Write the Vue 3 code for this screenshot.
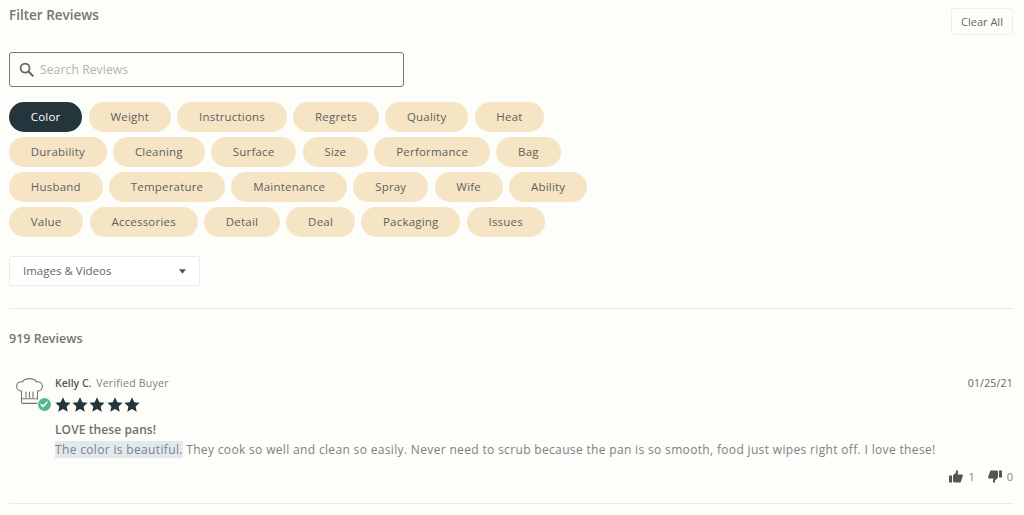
<script setup>
const rows = ['Color','Weight','Instructions','Regrets','Quality','Heat','Durability','Cleaning','Surface','Size','Performance','Bag','Husband','Temperature','Maintenance','Spray','Wife','Ability','Value','Accessories','Detail','Deal','Packaging','Issues'];
const stars = [1,2,3,4,5];
</script>

<template>
  <div class="page">
    <div class="head">
      <h2 class="title">Filter Reviews</h2>
      <button class="clear">Clear All</button>
    </div>
    <div class="search">
      <svg class="sicon" viewBox="0 0 16 16" width="15" height="15"><circle cx="6.5" cy="6.5" r="4.8" fill="none" stroke="#666" stroke-width="1.9"/><path d="M10.2 10.2L14.6 14.6" stroke="#666" stroke-width="2.2" stroke-linecap="round"/></svg>
      <span class="ph">Search Reviews</span>
    </div>
    <div class="pills">
      <span v-for="(p,i) in rows" :key="p" class="pill" :class="{on:i===0}">{{ p }}</span>
    </div>
    <div class="select">
      <span class="sel-label">Images &amp; Videos</span>
      <svg width="7" height="5" viewBox="0 0 8 5"><path d="M0 0H8L4 5Z" fill="#555"/></svg>
    </div>
    <hr class="rule r1" />
    <h3 class="count">919 Reviews</h3>
    <div class="review">
      <div class="avatar">
        <svg width="27" height="27" viewBox="0 0 27 27" fill="none" stroke="#777" stroke-width="1.1" stroke-linecap="round" stroke-linejoin="round">
          <path d="M5.5 17.5V13C2.5 13 .6 10.8 .6 8.2C.6 5.2 3.2 3.2 6.3 3.9C7.5 1.8 10 .6 13.4 .6C16.8 .6 19.3 1.8 20.6 3.9C23.6 3.2 26.4 5.2 26.4 8.2C26.4 10.8 24.5 13 21.5 13V21"/>
          <path d="M5.5 17.5V24C5.5 25 6 25.4 7 25.4H21"/>
          <path d="M10 14V19.5M13.5 14V19.5M17 14V19.5M5.5 20.8H21.5"/>
        </svg>
        <span class="badge"><svg width="8" height="7" viewBox="0 0 8 7" fill="none"><path d="M1 3.6L3 5.6L7 1.3" stroke="#fff" stroke-width="1.4" stroke-linecap="round" stroke-linejoin="round"/></svg></span>
      </div>
      <div class="body">
        <div class="meta">
          <div><b class="name">Kelly C.</b> <span class="ver">Verified Buyer</span></div>
          <span class="date">01/25/21</span>
        </div>
        <div class="stars">
          <svg v-for="s in stars" :key="s" width="16" height="15" viewBox="0 0 24 23"><path d="M12 0.5L15.5 8L23.6 8.9L17.6 14.4L19.2 22.5L12 18.4L4.8 22.5L6.4 14.4L0.4 8.9L8.5 8Z" fill="#24363b"/></svg>
        </div>
        <div class="rtitle">LOVE these pans!</div>
        <p class="text"><mark>The color is beautiful.</mark> They cook so well and clean so easily. Never need to scrub because the pan is so smooth, food just wipes right off. I love these!</p>
        <div class="votes">
          <svg width="14" height="13" viewBox="0 0 14 13"><path d="M0 5.5H3V12.5H0ZM4 5.5L7 2.5V0.3C8.6 0 9.4 1 9 2.5L8.6 4.5H13C14 4.5 14 5.5 13.7 6.2L12 11.5C11.8 12.3 11.3 12.5 10.6 12.5H5.5L4 11.8Z" fill="#555"/></svg>
          <span class="n">1</span>
          <svg class="down" width="14" height="13" viewBox="0 0 14 13"><path d="M0 5.5H3V12.5H0ZM4 5.5L7 2.5V0.3C8.6 0 9.4 1 9 2.5L8.6 4.5H13C14 4.5 14 5.5 13.7 6.2L12 11.5C11.8 12.3 11.3 12.5 10.6 12.5H5.5L4 11.8Z" fill="#555"/></svg>
          <span class="n">0</span>
        </div>
      </div>
    </div>
    <hr class="rule r2" />
  </div>
</template>

<style>
html, body { margin: 0; background: #fdfdf9; }
</style>

<style scoped>
.page { box-sizing: border-box; width: 1024px; height: 515px; overflow: hidden; padding: 0 11px 0 9px; background: #fdfdf9; font-family: "Open Sans", sans-serif; color: #6b6b6b; }
.head { display: flex; justify-content: space-between; align-items: flex-start; height: 52px; padding-top: 8px; box-sizing: border-box; }
.title { margin: 0; font-size: 13.5px; line-height: 15px; font-weight: 600; color: #757575; }
.clear { box-sizing: border-box; width: 62px; height: 27px; background: #fdfdf9; border: 1px solid #eeeeea; border-radius: 3px; font: 400 11px "Open Sans", sans-serif; color: #666; padding: 0; }
.search { box-sizing: border-box; width: 395px; height: 35px; border: 1px solid #777; border-radius: 3px; display: flex; align-items: center; gap: 6px; padding-left: 9px; }
.ph { font-size: 12px; color: #b2b2b2; letter-spacing: .15px; }
.pills { display: flex; flex-wrap: wrap; gap: 5px 6.4px; width: 600px; margin-top: 15px; }
.pill { box-sizing: border-box; height: 30px; padding: 0 21.8px; border-radius: 15px; background: #f5e5c4; font-size: 11.5px; line-height: 30px; color: #5f5f5f; letter-spacing: .2px; text-align: center; }
.pill.on { background: #24363b; color: #fff; }
.select { box-sizing: border-box; width: 191px; height: 30px; margin-top: 19px; background: #fff; border: 1px solid #ececea; border-radius: 2px; display: flex; justify-content: space-between; align-items: center; padding: 0 13px; font-size: 11.5px; color: #666; }
.sel-label { margin-top: -2px; }
.rule { border: 0; border-top: 1px solid #eaeae6; margin: 0; }
.r1 { margin-top: 22px; }
.count { margin: 21px 0 0; font-size: 12.5px; line-height: 17px; font-weight: 600; color: #757575; }
.review { display: flex; margin-top: 29px; }
.avatar { position: relative; width: 46px; padding: 2px 0 0 7px; box-sizing: border-box; flex: none; height: 40px; }
.badge { position: absolute; left: 28.5px; top: 22px; width: 13px; height: 13px; border-radius: 50%; background: #55b88a; display: flex; align-items: center; justify-content: center; }
.body { flex: 1; }
.meta { display: flex; justify-content: space-between; font-size: 10.5px; line-height: 14px; }
.name { font-weight: 600; color: #555; }
.ver { color: #7d7d7d; letter-spacing: .25px; margin-left: 2px; }
.date { color: #666; letter-spacing: .2px; }
.stars { display: flex; gap: 1.2px; margin-top: 7px; height: 15px; }
.rtitle { margin-top: 10px; font-size: 12px; line-height: 15px; font-weight: 600; color: #707070; letter-spacing: .1px; }
.text { margin: 4px 0 0; font-size: 12px; line-height: 17px; color: #808080; letter-spacing: .34px; }
mark { background: #e1e9ef; color: #808080; }
.votes { display: flex; justify-content: flex-end; align-items: center; margin-top: 11px; font-size: 11px; color: #808080; height: 14px; }
.n { margin-left: 5px; }
.down { transform: scale(-1, -1); margin-left: 13px; }
.r2 { margin-top: 20px; }
</style>
